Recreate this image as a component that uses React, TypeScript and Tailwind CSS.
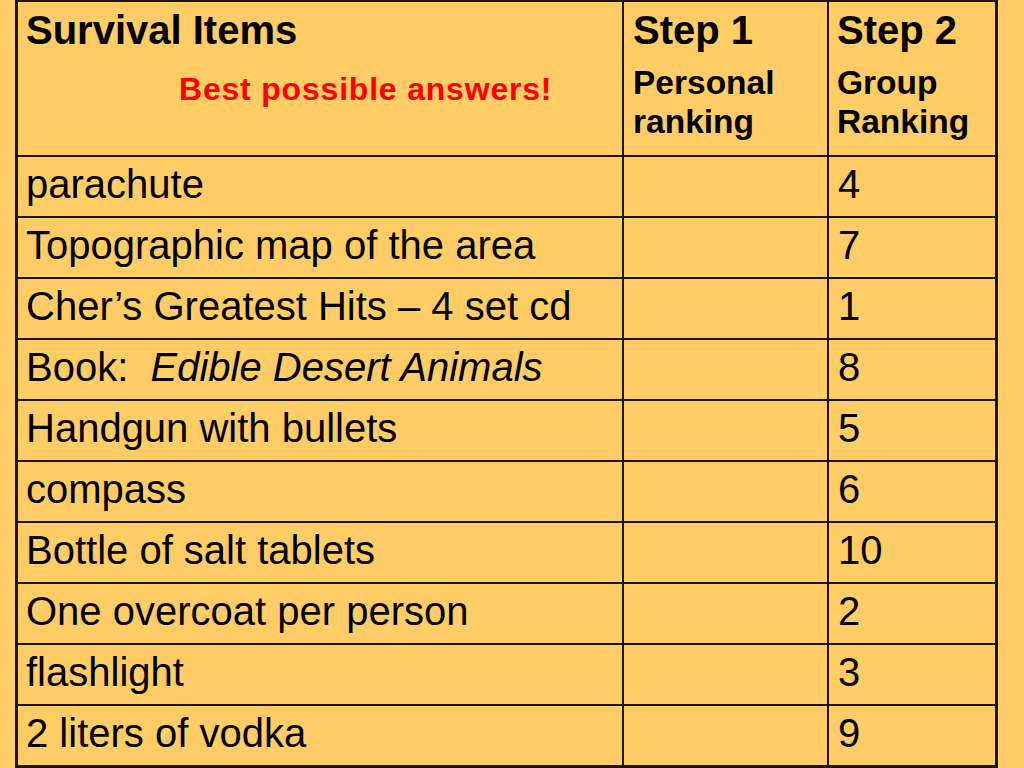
const rows: { item: React.ReactNode; rank: string }[] = [
  { item: 'parachute', rank: '4' },
  { item: 'Topographic map of the area', rank: '7' },
  { item: 'Cher’s Greatest Hits – 4 set cd', rank: '1' },
  {
    item: (
      <span className="whitespace-pre">
        Book:  <i>Edible Desert Animals</i>
      </span>
    ),
    rank: '8',
  },
  { item: 'Handgun with bullets', rank: '5' },
  { item: 'compass', rank: '6' },
  { item: 'Bottle of salt tablets', rank: '10' },
  { item: 'One overcoat per person', rank: '2' },
  { item: 'flashlight', rank: '3' },
  { item: '2 liters of vodka', rank: '9' },
];

export default function App() {
  return (
    <div
      className="w-[1024px] h-[768px] bg-[#ffcc66] pl-[15px] overflow-hidden text-black"
      style={{ fontFamily: '"Liberation Sans", Arial, sans-serif' }}
    >
      <div className="w-[983px] grid grid-cols-[604px_203px_166px] grid-rows-[153px_repeat(10,59px)] gap-[2px] bg-[#1c1408] border-[#1c1408] border-l-[3px] border-r-[3px] border-t-2 border-b-[3px]">
        {/* header */}
        <div className="bg-[#ffcc66] pl-2 pt-2">
          <div className="text-[40px] leading-none font-bold">Survival Items</div>
          <div className="mt-[23px] ml-[153px] text-[32px] leading-none font-bold text-[#ff0000] tracking-[0.8px]">
            Best possible answers!
          </div>
        </div>
        <div className="bg-[#ffcc66] pl-[9px] pt-2">
          <div className="text-[40px] leading-none font-bold">Step 1</div>
          <div className="mt-[13px] text-[33.5px] leading-[39px] font-bold">
            Personal
            <br />
            ranking
          </div>
        </div>
        <div className="bg-[#ffcc66] pl-2 pt-2">
          <div className="text-[40px] leading-none font-bold">Step 2</div>
          <div className="mt-[13px] text-[33.5px] leading-[39px] font-bold">
            Group
            <br />
            Ranking
          </div>
        </div>

        {rows.map((r, i) => (
          <div key={i} className="contents">
            <div className="bg-[#ffcc66] pl-2 pt-[7px] text-[40px] leading-none">{r.item}</div>
            <div className="bg-[#ffcc66]" />
            <div className="bg-[#ffcc66] pl-[9px] pt-[7px] text-[40px] leading-none">{r.rank}</div>
          </div>
        ))}
      </div>
    </div>
  );
}
